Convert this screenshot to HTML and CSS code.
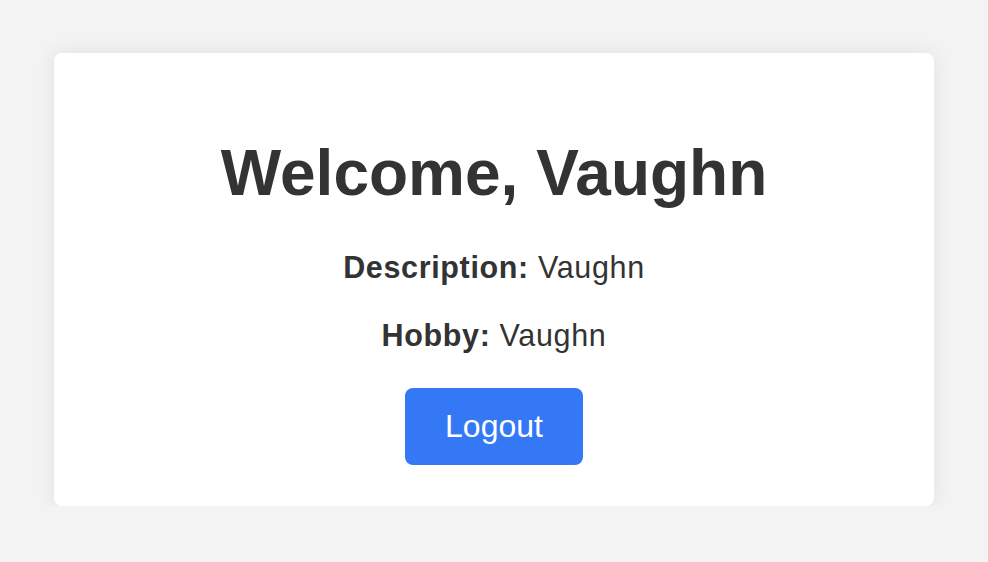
FILE: index.html
```html
<!DOCTYPE html>
<html lang="en">
<head>
<meta charset="utf-8">
<title>Welcome</title>
<link rel="stylesheet" href="styles.css">
</head>
<body>
<main class="card">
  <h1 class="title">Welcome, Vaughn</h1>
  <p class="info"><strong>Description:</strong> Vaughn</p>
  <p class="info info-last"><strong>Hobby:</strong> Vaughn</p>
  <button class="logout" type="button">Logout</button>
</main>
</body>
</html>
```
FILE: styles.css
```css
html, body {
  margin: 0;
  padding: 0;
}
body {
  background: #f3f3f3;
  font-family: "Liberation Sans", Arial, Helvetica, sans-serif;
  color: #333333;
  padding-top: 53px;
}
.card {
  box-sizing: border-box;
  width: 880px;
  margin: 0 auto;
  padding: 40px 40px 41px;
  background: #ffffff;
  border-radius: 8px;
  box-shadow: 0 0 20px rgba(0, 0, 0, 0.08);
  text-align: center;
}
.title {
  font-size: 64px;
  font-weight: bold;
  line-height: normal;
  margin: 43px 0 40px;
  color: #333333;
}
.info {
  font-size: 30.5px;
  letter-spacing: 0.65px;
  line-height: normal;
  margin: 0 0 33px;
  color: #333333;
}
.info-last {
  margin-bottom: 35px;
}
.logout {
  display: block;
  margin: 0 auto;
  padding: 20px 40px;
  font-family: "Liberation Sans", Arial, Helvetica, sans-serif;
  font-size: 32px;
  line-height: normal;
  color: #ffffff;
  background: #3478f6;
  border: none;
  border-radius: 8px;
  cursor: pointer;
}
```
